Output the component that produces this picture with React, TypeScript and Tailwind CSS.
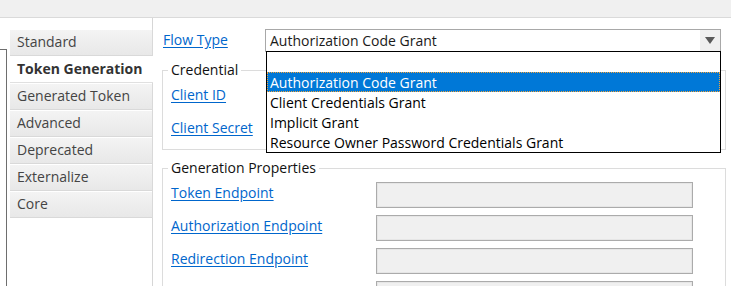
import React from "react";

const tabs = ["Standard", "Token Generation", "Generated Token", "Advanced", "Deprecated", "Externalize", "Core"];

function Row({ label }: { label: string }) {
  return (
    <div className="flex h-[26px] items-start">
      <span className="mt-[1px] w-[213px] pl-[8px] leading-[20px] text-[#0066cc] underline underline-offset-2">{label}</span>
      <div className="h-[26px] w-[317px] border border-[#ababab] bg-[#f0f0f0] shadow-[inset_0_0_0_1px_#e6e6e6]" />
    </div>
  );
}

export default function App() {
  const options = ["", "Authorization Code Grant", "Client Credentials Grant", "Implicit Grant", "Resource Owner Password Credentials Grant"];
  return (
    <div
      className="flex h-[286px] w-[731px] flex-col overflow-hidden bg-white text-[14px] text-[#1a1a1a]"
      style={{ fontFamily: '"Open Sans", "Noto Sans", sans-serif' }}
    >
      <div className="h-[18px] shrink-0 border-b border-[#dadada] bg-[#f0f0f0]" />
      <div className="flex min-h-0 flex-1">
        <div className="w-[10px] shrink-0 pt-[31px]">
          <div className="h-full w-[7px] border-r border-t border-[#6e6e6e]" />
        </div>
        <div className="flex w-[143px] shrink-0 flex-col">
          <div className="h-[11px] border-r border-[#d6d6d6]" />
          {tabs.map((t, i) =>
            i === 1 ? (
              <div key={t} className="flex h-[27px] items-center border-b border-[#e0e0e0] bg-white pl-[7px] pb-[1px] font-bold text-[#333]">
                {t}
              </div>
            ) : (
              <div
                key={t}
                className="flex h-[27px] items-center border-b border-r border-[#d9d9d9] bg-gradient-to-b from-[#f4f4f4] to-[#e8e8e8] pl-[7px] pb-[1px] text-[#444] shadow-[inset_0_1px_0_#ffffff]"
              >
                {t}
              </div>
            )
          )}
          <div className="flex-1 border-r border-[#d6d6d6]" />
        </div>
        <div className="relative min-w-0 flex-1 pl-[9px] pt-[11px] pr-[5px]">
          <div className="flex h-[23px] items-center">
            <span className="mb-[2px] w-[103px] pl-[1px] text-[#0066cc] underline underline-offset-2">Flow Type</span>
            <div className="flex h-[23px] w-[456px] items-center border border-[#a8a8a8] bg-white pl-[4px]">
              <span className="flex-1">Authorization Code Grant</span>
              <div className="flex h-full w-[20px] items-center justify-center bg-[#f0f0f0]">
                <svg width="10" height="7" viewBox="0 0 10 7">
                  <path d="M0 0 H10 L5 7 Z" fill="#5a5a5a" />
                </svg>
              </div>
            </div>
          </div>

          <fieldset className="mt-[8px] h-[90px] w-[564px] border border-[#dcdcdc]">
            <legend className="ml-[5px] px-[3px] leading-[20px] text-[#111]">Credential</legend>
            <div className="mt-[4px] flex flex-col gap-[7px]">
              <Row label="Client ID" />
              <Row label="Client Secret" />
            </div>
          </fieldset>

          <fieldset className="mt-[8px] h-[200px] w-[564px] border border-[#dcdcdc]">
            <legend className="ml-[5px] px-[3px] leading-[20px] text-[#111]">Generation Properties</legend>
            <div className="mt-[4px] flex flex-col gap-[7px]">
              <Row label="Token Endpoint" />
              <Row label="Authorization Endpoint" />
              <Row label="Redirection Endpoint" />
              <Row label="" />
            </div>
          </fieldset>

          <div className="absolute left-[113px] top-[33px] w-[455px] border border-black bg-white">
            {options.map((o, i) =>
              i === 1 ? (
                <div key={i} className="flex h-[20px] items-center border border-dotted border-[#f3a43a] bg-[#0078d7] pl-[2px] text-white">
                  {o}
                </div>
              ) : (
                <div key={i} className="flex h-[20px] items-center pl-[3px] text-black">
                  {o}
                </div>
              )
            )}
          </div>
        </div>
      </div>
    </div>
  );
}
